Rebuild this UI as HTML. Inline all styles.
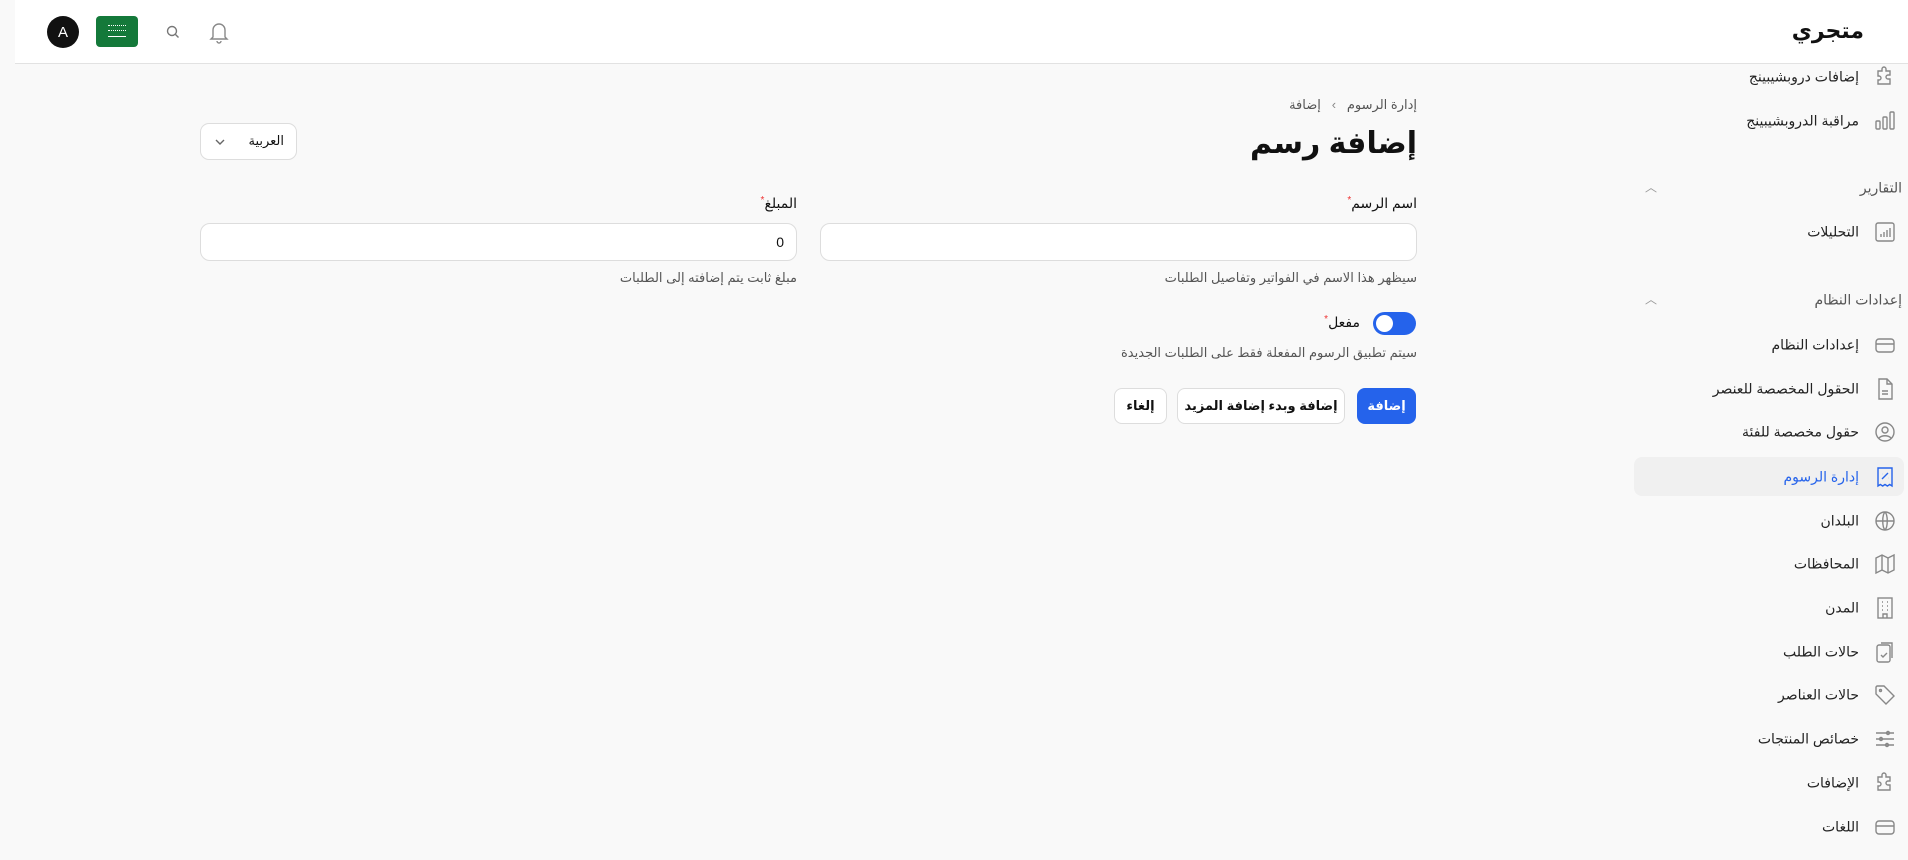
<!DOCTYPE html>
<html lang="ar"><head><meta charset="utf-8">
<style>
*{box-sizing:border-box;margin:0;padding:0}
body{width:1908px;height:860px;background:#f9f9f9;font-family:"Liberation Sans","DejaVu Sans",sans-serif;color:#111;position:relative;overflow:hidden}
.a{position:absolute}
.r{position:absolute;direction:rtl;white-space:nowrap}
header{position:absolute;left:15px;top:0;right:0;height:64px;background:#fff;border-bottom:1px solid #e2e2e2}
.inp{position:absolute;background:#fff;border:1px solid #ddd;border-radius:10px}
.btn{position:absolute;border-radius:8px;display:flex;align-items:center;justify-content:center;font-weight:bold;font-size:13px;direction:rtl}
.nav{position:absolute;right:49px;direction:rtl;font-size:14px;color:#222;white-space:nowrap;transform:translateY(-50%)}
.ic{position:absolute;left:1873px;width:24px;height:24px;transform:translateY(-50%)}
.ic svg{width:24px;height:24px;fill:none;stroke:#888;stroke-width:1.4}
.sec{position:absolute;right:6px;direction:rtl;font-size:14px;color:#555;transform:translateY(-50%)}
.chev{position:absolute;left:1645px;transform:translateY(-50%);color:#999;font-size:12px}
.star{color:#e33;font-size:10px;vertical-align:top}
</style></head><body>
<header></header>
<div class="r" style="right:44px;top:18px;font-size:22px;font-weight:bold">متجري</div>
<div class="a" style="left:47px;top:16px;width:32px;height:32px;border-radius:50%;background:#111;color:#fff;font-size:15px;display:flex;align-items:center;justify-content:center">A</div>
<div class="a" style="left:96px;top:16px;width:42px;height:31px;border-radius:4px;background:#14793a"><div class="a" style="left:12px;top:20px;width:18px;height:1px;background:#fff"></div><div class="a" style="left:12px;top:9px;width:18px;height:6px;border-top:1px dotted #fff;border-bottom:1px dotted #fff"></div></div>
<svg class="a" style="left:165px;top:24px" width="16" height="16" viewBox="0 0 16 16" fill="none" stroke="#777" stroke-width="1.4"><circle cx="7" cy="7" r="4.5"/><path d="M10.5 10.5l3 3"/></svg>
<svg class="a" style="left:208px;top:20px" width="22" height="24" viewBox="0 0 22 24" fill="none" stroke="#888" stroke-width="1.4"><path d="M5 17V10a6 6 0 0112 0v7l2 2H3z"/><path d="M9 21a2 2 0 004 0"/></svg>

<!-- sidebar -->
<div class="a" style="left:1634px;top:457px;width:270px;height:39px;background:#f0f0f0;border-radius:8px"></div>
<div class="ic" style="top:77px"><svg viewBox="0 0 24 24"><path d="M9 4a2 2 0 014 0v2h4v4h-2a2 2 0 000 4h2v5H5v-4h1a2 2 0 000-4H5V6h4z"/></svg></div>
<div class="nav" style="top:77px">إضافات دروبشيبينج</div>
<div class="ic" style="top:121px"><svg viewBox="0 0 24 24"><rect x="3" y="12" width="4" height="8" rx="1"/><rect x="10" y="8" width="4" height="12" rx="1"/><rect x="17" y="3" width="4" height="17" rx="1"/></svg></div>
<div class="nav" style="top:121px">مراقبة الدروبشيبينج</div>
<div class="sec" style="top:188px">التقارير</div><div class="chev" style="top:187px">︿</div>
<div class="ic" style="top:232px"><svg viewBox="0 0 24 24"><rect x="3" y="3" width="18" height="18" rx="2"/><path d="M8 17v-3M11 17v-5M14 17v-7M17 17v-9"/></svg></div>
<div class="nav" style="top:232px">التحليلات</div>
<div class="sec" style="top:300px">إعدادات النظام</div><div class="chev" style="top:299px">︿</div>
<div class="ic" style="top:345px"><svg viewBox="0 0 24 24"><rect x="3" y="6" width="18" height="13" rx="3"/><path d="M3 11h18"/></svg></div>
<div class="nav" style="top:345px">إعدادات النظام</div>
<div class="ic" style="top:389px"><svg viewBox="0 0 24 24"><path d="M6 2h8l5 5v15H6z"/><path d="M14 2v5h5M9 14h6M9 17h6"/></svg></div>
<div class="nav" style="top:389px">الحقول المخصصة للعنصر</div>
<div class="ic" style="top:432px"><svg viewBox="0 0 24 24"><circle cx="12" cy="12" r="9"/><circle cx="12" cy="10" r="3"/><path d="M6 18c3-3 9-3 12 0"/></svg></div>
<div class="nav" style="top:432px">حقول مخصصة للفئة</div>
<div class="ic" style="top:477px"><svg viewBox="0 0 24 24" style="stroke:#2563eb"><path d="M5 3h14v18l-2.3-1.5-2.3 1.5-2.4-1.5-2.3 1.5-2.4-1.5L5 21z"/><path d="M9 14l6-6M9 9h.1M15 13h.1"/></svg></div>
<div class="nav" style="top:477px;color:#2563eb">إدارة الرسوم</div>
<div class="ic" style="top:521px"><svg viewBox="0 0 24 24"><circle cx="12" cy="12" r="9"/><path d="M3 12h18M12 3c3 3 3 15 0 18M12 3c-3 3-3 15 0 18"/></svg></div>
<div class="nav" style="top:521px">البلدان</div>
<div class="ic" style="top:564px"><svg viewBox="0 0 24 24"><path d="M3 6l6-3 6 3 6-3v15l-6 3-6-3-6 3z"/><path d="M9 3v15M15 6v15"/></svg></div>
<div class="nav" style="top:564px">المحافظات</div>
<div class="ic" style="top:608px"><svg viewBox="0 0 24 24"><rect x="5" y="2" width="14" height="20"/><path d="M9 6h1M14 6h1M9 10h1M14 10h1M9 14h1M14 14h1M10 22v-4h4v4"/></svg></div>
<div class="nav" style="top:608px">المدن</div>
<div class="ic" style="top:652px"><svg viewBox="0 0 24 24"><rect x="4" y="5" width="13" height="17" rx="2"/><path d="M8 3h11v15M8 15l2 2 4-4"/></svg></div>
<div class="nav" style="top:652px">حالات الطلب</div>
<div class="ic" style="top:695px"><svg viewBox="0 0 24 24"><path d="M3 4v7l10 10 8-8L11 3H4z"/><circle cx="7.5" cy="7.5" r="1"/></svg></div>
<div class="nav" style="top:695px">حالات العناصر</div>
<div class="ic" style="top:739px"><svg viewBox="0 0 24 24"><path d="M3 6h18M3 12h18M3 18h18"/><circle cx="15" cy="6" r="1.5"/><circle cx="8" cy="12" r="1.5"/><circle cx="14" cy="18" r="1.5"/></svg></div>
<div class="nav" style="top:739px">خصائص المنتجات</div>
<div class="ic" style="top:783px"><svg viewBox="0 0 24 24"><path d="M9 4a2 2 0 014 0v2h4v4h-2a2 2 0 000 4h2v5H5v-4h1a2 2 0 000-4H5V6h4z"/></svg></div>
<div class="nav" style="top:783px">الإضافات</div>
<div class="ic" style="top:827px"><svg viewBox="0 0 24 24"><rect x="3" y="6" width="18" height="13" rx="3"/><path d="M3 11h18"/></svg></div>
<div class="nav" style="top:827px">اللغات</div>

<!-- main -->
<div class="r" style="right:491px;top:97px;font-size:13px;color:#555">إدارة الرسوم &nbsp;&nbsp;<span style="color:#888">›</span>&nbsp;&nbsp; إضافة</div>
<div class="r" style="right:491px;top:126px;font-size:30px;font-weight:bold">إضافة رسم</div>
<div class="inp" style="left:200px;top:123px;width:97px;height:37px;border-radius:9px"><span class="r" style="right:12px;top:9px;font-size:13px">العربية</span><svg class="a" style="left:14px;top:14px" width="10" height="8" viewBox="0 0 10 8" fill="none" stroke="#666" stroke-width="1.4"><path d="M1 2l4 4 4-4"/></svg></div>

<div class="r" style="right:491px;top:195px;font-size:14px">اسم الرسم<span class="star">*</span></div>
<div class="inp" style="left:820px;top:223px;width:597px;height:38px"></div>
<div class="r" style="right:491px;top:270px;font-size:13px;color:#555">سيظهر هذا الاسم في الفواتير وتفاصيل الطلبات</div>

<div class="r" style="right:1111px;top:195px;font-size:14px">المبلغ<span class="star">*</span></div>
<div class="inp" style="left:200px;top:223px;width:597px;height:38px"><span class="a" style="right:12px;top:10px;font-size:14px">0</span></div>
<div class="r" style="right:1111px;top:270px;font-size:13px;color:#555">مبلغ ثابت يتم إضافته إلى الطلبات</div>

<div class="a" style="left:1373px;top:312px;width:43px;height:23px;border-radius:12px;background:#2563eb"><div class="a" style="left:3px;top:3px;width:17px;height:17px;border-radius:50%;background:#fff"></div></div>
<div class="r" style="right:548px;top:314px;font-size:14px">مفعل<span class="star">*</span></div>
<div class="r" style="right:491px;top:345px;font-size:13px;color:#555">سيتم تطبيق الرسوم المفعلة فقط على الطلبات الجديدة</div>

<div class="btn" style="left:1357px;top:388px;width:59px;height:36px;background:#2563eb;color:#fff">إضافة</div>
<div class="btn" style="left:1177px;top:388px;width:168px;height:36px;background:#fff;border:1px solid #ddd">إضافة وبدء إضافة المزيد</div>
<div class="btn" style="left:1114px;top:388px;width:53px;height:36px;background:#fff;border:1px solid #ddd">إلغاء</div>
</body></html>
